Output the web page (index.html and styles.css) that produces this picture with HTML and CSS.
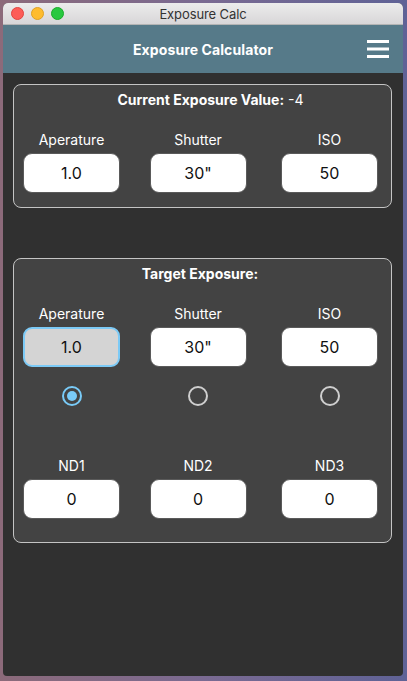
FILE: index.html
```html
<!DOCTYPE html>
<html>
<head>
<meta charset="utf-8">
<link rel="stylesheet" href="styles.css">
</head>
<body>
<div class="window">
  <div class="titlebar">
    <div class="lights">
      <span class="light red"></span>
      <span class="light yellow"></span>
      <span class="light green"></span>
    </div>
    <div class="wintitle">Exposure Calc</div>
    <div class="spacer"></div>
  </div>
  <div class="appbar">
    <div class="spacer"></div>
    <div class="apptitle">Exposure Calculator</div>
    <div class="menu">
      <svg width="22" height="19" viewBox="0 0 22 19"><rect x="0" y="0" width="22" height="3" fill="#fff"/><rect x="0" y="7.5" width="22" height="3" fill="#fff"/><rect x="0" y="15" width="22" height="3" fill="#fff"/></svg>
    </div>
  </div>
  <div class="content">
    <section class="card card-current">
      <div class="card-title title-current"><b>Current Exposure Value:</b> -4</div>
      <div class="row">
        <div class="field"><div class="label">Aperature</div><div class="input">1.0</div></div>
        <div class="field mid"><div class="label">Shutter</div><div class="input">30"</div></div>
        <div class="field"><div class="label">ISO</div><div class="input">50</div></div>
      </div>
    </section>
    <section class="card card-target">
      <div class="card-title title-target"><b>Target Exposure:</b></div>
      <div class="row">
        <div class="field"><div class="label">Aperature</div><div class="input focused">1.0</div></div>
        <div class="field mid"><div class="label">Shutter</div><div class="input">30"</div></div>
        <div class="field"><div class="label">ISO</div><div class="input">50</div></div>
      </div>
      <div class="row radios">
        <div class="field"><span class="radio checked"></span></div>
        <div class="field mid"><span class="radio"></span></div>
        <div class="field"><span class="radio"></span></div>
      </div>
      <div class="row nd">
        <div class="field"><div class="label">ND1</div><div class="input">0</div></div>
        <div class="field mid"><div class="label">ND2</div><div class="input">0</div></div>
        <div class="field"><div class="label">ND3</div><div class="input">0</div></div>
      </div>
    </section>
  </div>
</div>
</body>
</html>
```

FILE: styles.css
```css
html, body {
  margin: 0;
  padding: 0;
  height: 100%;
}
body {
  background: linear-gradient(to right, #8c6a7a 0%, #7a6a92 50%, #5f6296 100%);
  font-family: "Inter", "Open Sans", sans-serif;
  overflow: hidden;
}
.window {
  margin: 3px 4px 0 3px;
  height: 673px;
  display: flex;
  flex-direction: column;
  border-radius: 5px 5px 4px 4px;
  overflow: hidden;
  background: #303030;
}
.titlebar {
  height: 22px;
  flex: none;
  background: linear-gradient(#ececec, #d8d6d8);
  border-bottom: 1px solid #b4b4b4;
  box-sizing: border-box;
  display: grid;
  grid-template-columns: 1fr auto 1fr;
  align-items: center;
}
.lights {
  display: flex;
  gap: 7px;
  padding-left: 8px;
}
.light {
  width: 13px;
  height: 13px;
  border-radius: 50%;
  box-sizing: border-box;
}
.red { background: #fd5c57; border: 1px solid #e0443e; }
.yellow { background: #febc2e; border: 1px solid #dea123; }
.green { background: #28c840; border: 1px solid #1aab29; }
.wintitle {
  font-size: 13px;
  color: #333;
  font-family: "Inter", sans-serif;
  letter-spacing: -0.1px;
}
.appbar {
  height: 48px;
  flex: none;
  background: #567a89;
  display: grid;
  grid-template-columns: 1fr auto 1fr;
  align-items: center;
}
.apptitle {
  color: #fff;
  font-weight: 700;
  font-size: 14px;
  letter-spacing: 0.1px;
}
.menu {
  justify-self: end;
  padding-right: 14px;
  display: flex;
}
.content {
  flex: 1;
  padding: 11px 11px 0 10px;
  display: flex;
  flex-direction: column;
  gap: 50px;
}
.card {
  background: #434343;
  border: 1px solid #c4c4c4;
  border-radius: 8px;
  padding: 6px 13px 14px 9px;
}
.card-target { padding-bottom: 23px; }
.card-title {
  color: #fff;
  font-size: 14px;
  line-height: 18px;
  text-align: center;
}
.title-current { padding-left: 20px; }
.title-target { padding-right: 1px; }
.card-title b { font-weight: 700; }
.row {
  display: flex;
  justify-content: space-between;
  margin-top: 22px;
}
.field {
  width: 97px;
  display: flex;
  flex-direction: column;
  align-items: center;
}
.field.mid { margin-left: -5px; }
.label {
  color: #fff;
  font-size: 14px;
  line-height: 18px;
  margin-bottom: 4px;
}
.input {
  width: 100%;
  height: 40px;
  box-sizing: border-box;
  background: #fff;
  border: 1px solid #5a5a5a;
  border-radius: 9px;
  display: flex;
  align-items: center;
  justify-content: center;
  font-size: 16px;
  color: #111;
}
.input.focused {
  background: #d4d4d4;
  border: 2px solid #7ccaf6;
}
.row.radios { margin-top: 19px; }
.row.nd { margin-top: 51px; }
.radio {
  width: 20px;
  height: 20px;
  box-sizing: border-box;
  border-radius: 50%;
  border: 2px solid #cfcfcf;
  display: flex;
  align-items: center;
  justify-content: center;
}
.radio.checked { border-color: #79cbf8; }
.radio.checked::after {
  content: "";
  width: 10px;
  height: 10px;
  border-radius: 50%;
  background: #79cbf8;
}
```
